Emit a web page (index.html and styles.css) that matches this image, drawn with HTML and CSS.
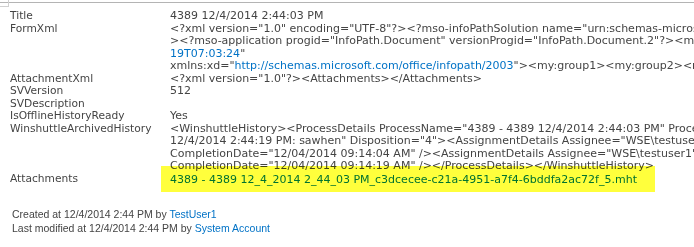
FILE: index.html
```html
<!DOCTYPE html>
<html lang="en">
<head>
    <meta charset="UTF-8">
    <title>Item properties</title>
    <link rel="stylesheet" href="styles.css">
</head>
<body>

    <div class="topbar">
        <div class="corner"></div>
    </div>

    <table class="props">
        <tr>
            <td class="label">Title</td>
            <td class="value">4389 12/4/2014 2:44:03 PM</td>
        </tr>
        <tr>
            <td class="label">FormXml</td>
            <td class="value">&lt;?xml version="1.0" encoding="UTF-8"?&gt;&lt;?mso-infoPathSolution name="urn:schemas-microsoft-com:office:infopath:WinshuttleForm:-myXSD-2014-11-19T07-03-24" solutionVersion="1.0.0.5"?&gt;&lt;?mso-application<br>&gt;&lt;?mso-application progid="InfoPath.Document" versionProgid="InfoPath.Document.2"?&gt;&lt;my:myFields xmlns:my="<a href="#">http://schemas.microsoft.com/office/infopath/2003/myXSD/2014-11-</a><br><a href="#">19T07:03:24</a>"<br>xmlns:xd="<a href="#">http://schemas.microsoft.com/office/infopath/2003</a>"&gt;&lt;my:group1&gt;&lt;my:group2&gt;&lt;my:field1&gt;&lt;/my:field1&gt;&lt;/my:group2&gt;</td>
        </tr>
        <tr>
            <td class="label">AttachmentXml</td>
            <td class="value">&lt;?xml version="1.0"?&gt;&lt;Attachments&gt;&lt;/Attachments&gt;</td>
        </tr>
        <tr>
            <td class="label">SVVersion</td>
            <td class="value">512</td>
        </tr>
        <tr>
            <td class="label">SVDescription</td>
            <td class="value"></td>
        </tr>
        <tr>
            <td class="label">IsOfflineHistoryReady</td>
            <td class="value">Yes</td>
        </tr>
        <tr>
            <td class="label">WinshuttleArchivedHistory</td>
            <td class="value">&lt;WinshuttleHistory&gt;&lt;ProcessDetails ProcessName="4389 - 4389 12/4/2014 2:44:03 PM" ProcessDescription="Submitted on<br>12/4/2014 2:44:19 PM: sawhen" Disposition="4"&gt;&lt;AssignmentDetails Assignee="WSE\testuser1" AssignedDate="12/04/2014 09:13:58 AM"<br>CompletionDate="12/04/2014 09:14:04 AM" /&gt;&lt;AssignmentDetails Assignee="WSE\testuser1" AssignedDate="12/04/2014 09:14:05 AM"<br>CompletionDate="12/04/2014 09:14:19 AM" /&gt;&lt;/ProcessDetails&gt;&lt;/WinshuttleHistory&gt;</td>
        </tr>
        <tr>
            <td class="label">Attachments</td>
            <td class="value attach">
                <a href="#">4389 - 4389 12_4_2014 2_44_03 PM_c3dcecee-c21a-4951-a7f4-6bddfa2ac72f_5.mht</a>
                <span class="marker"></span>
            </td>
        </tr>
    </table>

    <div class="footer">
        <div>Created at 12/4/2014 2:44 PM by <a href="#">TestUser1</a></div>
        <div>Last modified at 12/4/2014 2:44 PM by <a href="#">System Account</a></div>
    </div>

</body>
</html>
```

FILE: styles.css
```css
body {
    margin: 0;
    background-color: #fff;
    color: #444;
    font-family: "DejaVu Sans", Verdana, sans-serif;
    overflow: hidden;
}
a {
    color: #0072c6;
    text-decoration: none;
}
.topbar {
    height: 7px;
    border-top: 1px solid #b4b4b4;
    margin-top: 2px;
    position: relative;
}
.corner {
    position: absolute;
    left: 0;
    top: -3px;
    width: 8px;
    height: 6px;
    border-right: 1px solid #d0d0d0;
    border-bottom: 1px solid #d0d0d0;
}
.props {
    border-collapse: collapse;
    font-size: 11px;
    line-height: 12.5px;
}
.props td {
    padding: 0;
    vertical-align: top;
    white-space: nowrap;
}
.label {
    width: 160px;
    min-width: 160px;
    padding-left: 10px !important;
    font-size: 10.67px;
}
.attach {
    position: relative;
    padding-top: 1px !important;
}
.marker {
    position: absolute;
    left: -9px;
    top: -7px;
    width: 494px;
    height: 26px;
    background-color: rgb(255, 255, 60);
    mix-blend-mode: multiply;
}
.footer {
    margin-top: 21px;
    padding-left: 12px;
    font-family: "Liberation Sans", Arial, sans-serif;
    font-size: 10.5px;
    line-height: 14px;
}
```
